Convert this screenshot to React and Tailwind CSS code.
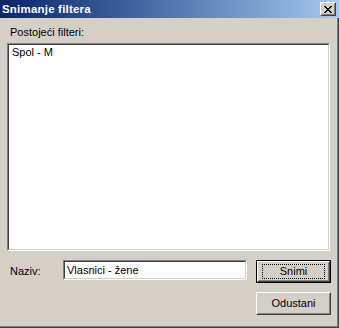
import React from 'react';

const closeGlyph = [
  'XX....XX',
  '.XX..XX.',
  '..XXXX..',
  '...XX...',
  '..XXXX..',
  '.XX..XX.',
  'XX....XX',
];

const CloseIcon = () => (
  <svg width="8" height="7" viewBox="0 0 8 7" shapeRendering="crispEdges">
    {closeGlyph.map((row, y) =>
      row.split('').map((c, x) =>
        c === 'X' ? <rect key={`${x}-${y}`} x={x} y={y} width="1" height="1" fill="#000" /> : null
      )
    )}
  </svg>
);

// raised 3D bevel, win2000 style
const Raised = ({ className = '', children }) => (
  <div className={`border border-t-white border-l-white border-b-[#404040] border-r-[#404040] bg-[#d4d0c8] ${className}`}>
    <div className="w-full h-full border border-t-[#d4d0c8] border-l-[#d4d0c8] border-b-[#808080] border-r-[#808080] flex items-center justify-center">
      {children}
    </div>
  </div>
);

// sunken field bevel
const Sunken = ({ className = '', children }) => (
  <div className={`border border-t-[#808080] border-l-[#808080] border-b-white border-r-white ${className}`}>
    <div className="w-full h-full border border-t-[#404040] border-l-[#404040] border-b-[#d4d0c8] border-r-[#d4d0c8] bg-white">
      {children}
    </div>
  </div>
);

export default function App() {
  return (
    <div
      className="w-[339px] h-[328px] flex flex-col bg-[#d4d0c8] text-[11px] leading-[13px] text-black overflow-hidden"
      style={{ fontFamily: '"Liberation Sans", Arial, sans-serif' }}
    >
      {/* Title bar */}
      <div className="h-[18px] shrink-0 flex items-center justify-between pl-[2px] pr-[3px] bg-linear-to-r from-[#0a246a] to-[#a6caf0]">
        <span className="font-bold text-white text-[11.5px] leading-[13px] tracking-[0.2px]">Snimanje filtera</span>
        <Raised className="w-[16px] h-[14px]">
          <CloseIcon />
        </Raised>
      </div>

      {/* Body with frame on right/bottom */}
      <div className="flex-1 flex flex-col border-r border-b border-r-[#404040] border-b-[#404040]">
        <div className="flex-1 flex flex-col border-r border-b border-r-[#808080] border-b-[#808080] pl-[7px] pt-[8px]">
          <div className="pl-[3px] h-[13px]">Postojeći filteri:</div>

          <Sunken className="mt-[4px] w-[323px] h-[208px]">
            <div className="pl-[3px] pt-[1px]">Spol - M</div>
          </Sunken>

          <div className="mt-[9px] flex items-start">
            <div className="w-[56px] pl-[3px] pt-[5px]">Naziv:</div>
            <Sunken className="w-[184px] h-[20px]">
              <div className="pl-[2px] pt-[2px]">Vlasnici - žene</div>
            </Sunken>
            <div className="ml-[9px] flex flex-col gap-[9px]">
              <div className="w-[75px] h-[23px] border border-black">
                <Raised className="w-full h-full">
                  <div className="w-[63px] h-[15px] border border-dotted border-black flex items-center justify-center">
                    Snimi
                  </div>
                </Raised>
              </div>
              <Raised className="w-[75px] h-[23px]">Odustani</Raised>
            </div>
          </div>
        </div>
      </div>
    </div>
  );
}
